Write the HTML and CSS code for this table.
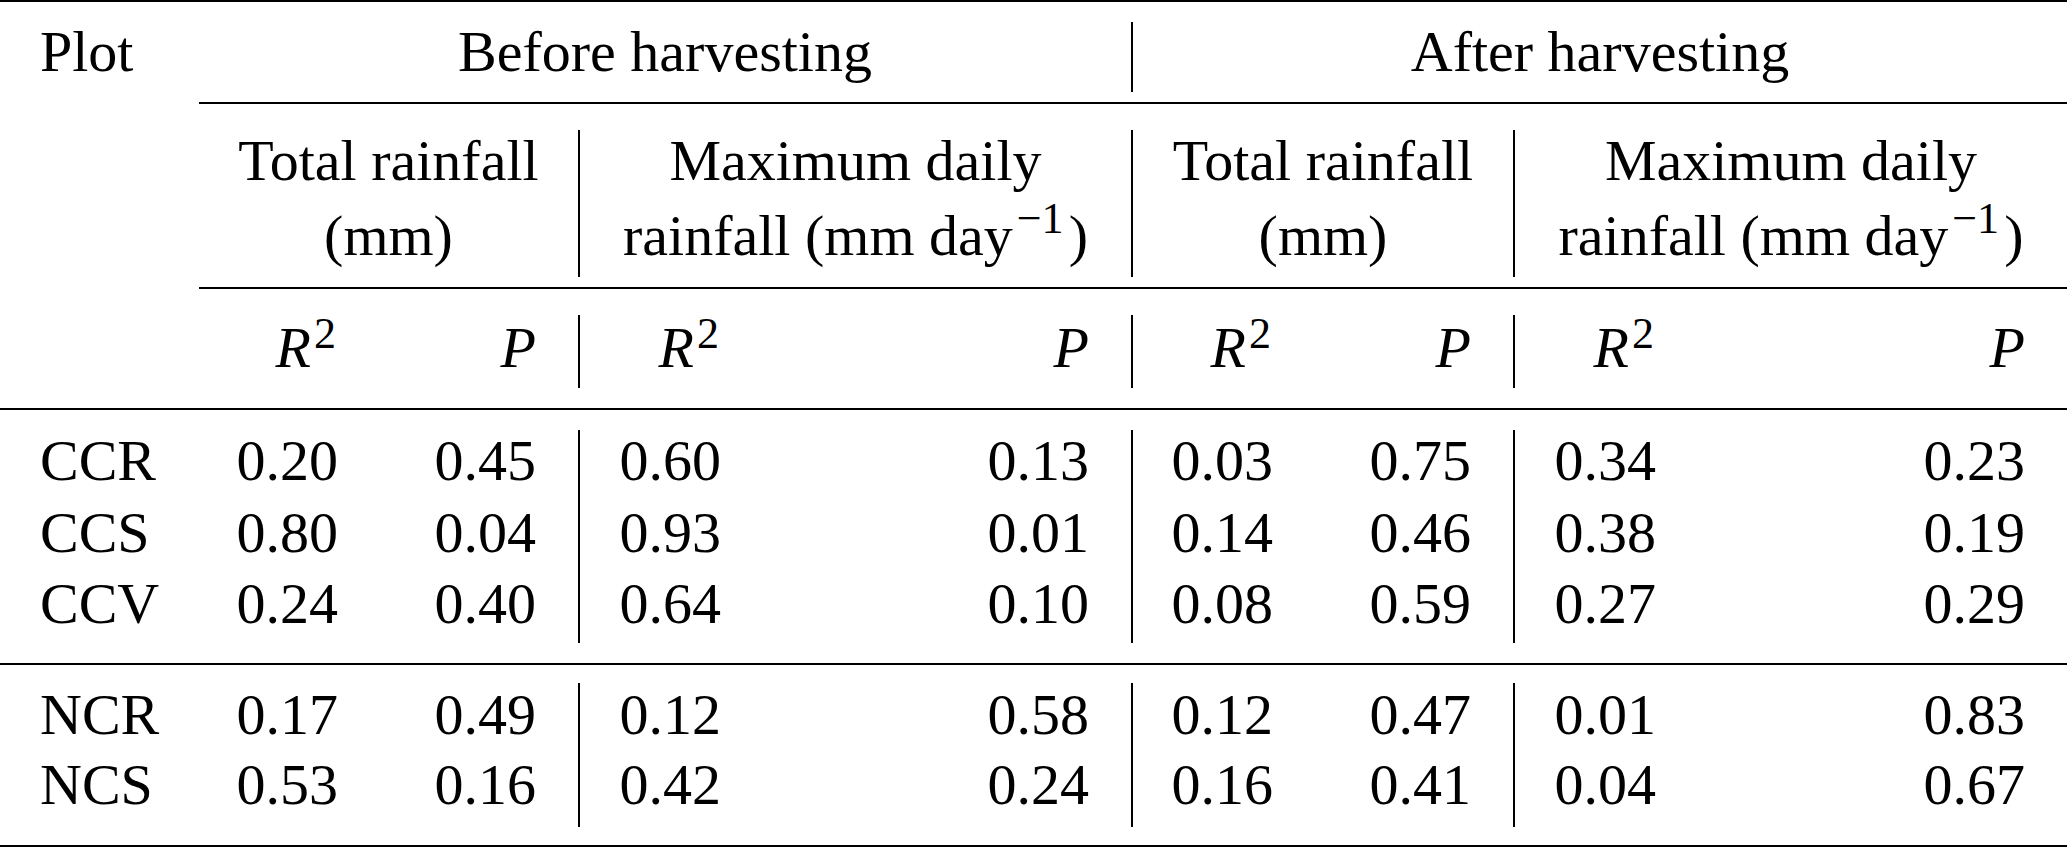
FILE: index.html
```html
<!DOCTYPE html>
<html lang="en">
<head>
<meta charset="utf-8">
<title>Rainfall regression table</title>
<link rel="stylesheet" href="styles.css">
</head>
<body>
<div class="table">
  <div class="rule"></div>

  <div class="tr h1">
    <div class="c lbl">Plot</div>
    <div class="c ctr span5">Before harvesting</div>
    <div class="vbar"></div>
    <div class="c ctr span5">After harvesting</div>
  </div>

  <div class="rule part"></div>

  <div class="tr h2">
    <div class="c ctr from2 span2">Total rainfall<br>(mm)</div>
    <div class="vbar"></div>
    <div class="c ctr span2">Maximum daily<br>rainfall (mm day<span class="sup sm">−1</span>)</div>
    <div class="vbar"></div>
    <div class="c ctr span2">Total rainfall<br>(mm)</div>
    <div class="vbar"></div>
    <div class="c ctr span2">Maximum daily<br>rainfall (mm day<span class="sup sm">−1</span>)</div>
  </div>

  <div class="rule part"></div>

  <div class="tr h3">
    <div class="c num from2"><i>R</i><span class="sup sq">2</span></div>
    <div class="c num"><i>P</i></div>
    <div class="vbar"></div>
    <div class="c num"><i>R</i><span class="sup sq">2</span></div>
    <div class="c num"><i>P</i></div>
    <div class="vbar"></div>
    <div class="c num"><i>R</i><span class="sup sq">2</span></div>
    <div class="c num"><i>P</i></div>
    <div class="vbar"></div>
    <div class="c num"><i>R</i><span class="sup sq">2</span></div>
    <div class="c num"><i>P</i></div>
  </div>

  <div class="rule"></div>

  <div class="tr g1 first">
    <div class="c lbl">CCR</div>
    <div class="c num">0.20</div>
    <div class="c num">0.45</div>
    <div class="vbar"></div>
    <div class="c num">0.60</div>
    <div class="c num">0.13</div>
    <div class="vbar"></div>
    <div class="c num">0.03</div>
    <div class="c num">0.75</div>
    <div class="vbar"></div>
    <div class="c num">0.34</div>
    <div class="c num">0.23</div>
  </div>
  <div class="tr g1">
    <div class="c lbl">CCS</div>
    <div class="c num">0.80</div>
    <div class="c num">0.04</div>
    <div class="c num">0.93</div>
    <div class="c num">0.01</div>
    <div class="c num">0.14</div>
    <div class="c num">0.46</div>
    <div class="c num">0.38</div>
    <div class="c num">0.19</div>
  </div>
  <div class="tr g1 last">
    <div class="c lbl">CCV</div>
    <div class="c num">0.24</div>
    <div class="c num">0.40</div>
    <div class="c num">0.64</div>
    <div class="c num">0.10</div>
    <div class="c num">0.08</div>
    <div class="c num">0.59</div>
    <div class="c num">0.27</div>
    <div class="c num">0.29</div>
  </div>

  <div class="rule"></div>

  <div class="tr g2 first">
    <div class="c lbl">NCR</div>
    <div class="c num">0.17</div>
    <div class="c num">0.49</div>
    <div class="vbar"></div>
    <div class="c num">0.12</div>
    <div class="c num">0.58</div>
    <div class="vbar"></div>
    <div class="c num">0.12</div>
    <div class="c num">0.47</div>
    <div class="vbar"></div>
    <div class="c num">0.01</div>
    <div class="c num">0.83</div>
  </div>
  <div class="tr g2 last">
    <div class="c lbl">NCS</div>
    <div class="c num">0.53</div>
    <div class="c num">0.16</div>
    <div class="c num">0.42</div>
    <div class="c num">0.24</div>
    <div class="c num">0.16</div>
    <div class="c num">0.41</div>
    <div class="c num">0.04</div>
    <div class="c num">0.67</div>
  </div>

  <div class="rule"></div>
</div>
</body>
</html>
```

FILE: styles.css
```css
html, body {
  margin: 0;
  padding: 0;
  background: #ffffff;
}

body {
  width: 2067px;
  height: 848px;
  overflow: hidden;
}

.table {
  display: grid;
  grid-template-columns: 199px 181px 198px 2px 183px 368px 2px 182px 198px 2px 183px 369px;
  font-family: "Liberation Serif", "Times New Roman", serif;
  font-size: 58px;
  color: #000000;
}

.tr {
  display: contents;
}

.rule {
  grid-column: 1 / -1;
  height: 2px;
  background: #000000;
}

.rule.part {
  grid-column: 2 / -1;
}

.c {
  white-space: nowrap;
}

.lbl {
  padding-left: 40px;
  text-align: left;
}

.ctr {
  text-align: center;
}

.num {
  text-align: right;
  padding-right: 42px;
}

.from2 {
  grid-column-start: 2;
}

.span2 {
  grid-column-end: span 2;
}

.span5 {
  grid-column-end: span 5;
}

.vbar {
  background: #000000;
}

.sup {
  line-height: 0;
  font-style: normal;
}

.sup.sq {
  font-size: 0.76em;
  vertical-align: 19px;
  margin-left: 3px;
  margin-right: 2px;
}

.sup.sm {
  font-size: 0.76em;
  vertical-align: 22px;
  margin-left: 4px;
  margin-right: 5px;
}

/* header row 1 */
.h1 > .c {
  padding-top: 18px;
  padding-bottom: 18px;
  line-height: 64px;
}

.h1 > .vbar {
  margin: 20px 0 10px;
}

/* header row 2 */
.h2 > .c {
  padding-top: 19px;
  padding-bottom: 14px;
  line-height: 75px;
}

.h2 > .vbar {
  margin: 26px 0 10px;
}

/* header row 3 */
.h3 > .c {
  padding-top: 27px;
  padding-bottom: 28px;
  line-height: 64px;
}

.h3 > .vbar {
  margin: 26px 0 20px;
}

/* data group 1 */
.g1 > .c {
  line-height: 71.5px;
}

.g1.first > .c {
  padding-top: 15px;
}

.g1.last > .c {
  padding-bottom: 23.5px;
}

.g1 > .vbar {
  grid-row-end: span 3;
  margin: 20px 0 20px;
}

/* data group 2 */
.g2 > .c {
  line-height: 70px;
}

.g2.first > .c {
  padding-top: 15px;
}

.g2.last > .c {
  padding-bottom: 25px;
}

.g2 > .vbar {
  grid-row-end: span 2;
  margin: 18px 0 18px;
}
```
